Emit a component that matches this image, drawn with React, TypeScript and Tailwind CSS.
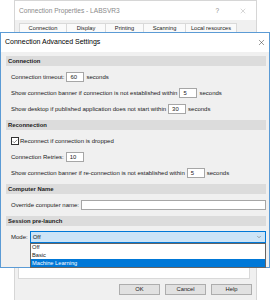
import { X, ChevronDown, Check } from "lucide-react";

const font = { fontFamily: '"Liberation Sans", Arial, sans-serif' };

function SectionHeader({ title }: { title: string }) {
  return (
    <div className="h-[10px] bg-[#dcdcdc] pl-[2px] flex items-center text-[5.9px] font-bold text-[#1a1a1a]">
      {title}
    </div>
  );
}

function NumBox({ value, w = "w-[18px]" }: { value: string; w?: string }) {
  return (
    <div className={`${w} h-[10px] bg-white border border-[#a6a6a6] flex items-center pl-[3px] text-[5.9px] mx-[2px]`}>
      {value}
    </div>
  );
}

function Row({ children }: { children: React.ReactNode }) {
  return <div className="h-[10px] flex items-center pl-[5px] text-[6px] text-[#1a1a1a]">{children}</div>;
}

const tabs = [
  { label: "Connection", w: "w-[48px]" },
  { label: "Display", w: "w-[40px]" },
  { label: "Printing", w: "w-[39px]" },
  { label: "Scanning", w: "w-[43px]" },
  { label: "Local resources", w: "w-[52px]" },
];

export default function App() {
  return (
    <div className="relative w-[271px] h-[300px] bg-white overflow-hidden" style={font}>
      {/* background window */}
      <div className="absolute left-[14px] top-0 w-[243px] h-[310px] border border-[#d6d6d6] bg-[#f0f0f0] flex flex-col">
        <div className="h-[19px] bg-white flex items-center pl-[4px] pr-[9px] text-[6.6px] text-[#8a8a8a]">
          <span className="flex-1">Connection Properties - LABSVR3</span>
          <span className="mr-[20px] text-[6.5px]">?</span>
          <X size={8} strokeWidth={1.2} className="text-[#9a9a9a]" />
        </div>
        <div className="flex pl-[5px] mt-[3px] h-[10px]">
          {tabs.map((t) => (
            <div
              key={t.label}
              className={`${t.w} h-[10px] border border-[#d9d9d9] -ml-px bg-[#fafafa] flex items-center justify-center text-[5.7px] text-[#1a1a1a]`}
            >
              {t.label}
            </div>
          ))}
        </div>
        <div className="mx-[3px] w-[232px] h-[246px] bg-white border border-[#d9d9d9]" />
        <div className="flex justify-end gap-[5px] pr-[4px] mt-[5px]">
          {["OK", "Cancel", "Help"].map((b) => (
            <div
              key={b}
              className="w-[41px] h-[11px] bg-[#e1e1e1] border border-[#adadad] flex items-center justify-center text-[5.8px] text-[#1a1a1a]"
            >
              {b}
            </div>
          ))}
        </div>
      </div>

      {/* front dialog */}
      <div className="absolute left-0 top-[32px] w-[270px] h-[236px] border border-[#5b9bd5] bg-[#f0f0f0] flex flex-col">
        <div className="h-[19px] bg-white flex items-center pl-[4px] pr-[3px] text-[7px] text-black shrink-0">
          <span className="flex-1">Connection Advanced Settings</span>
          <X size={9} strokeWidth={1.2} className="text-[#222]" />
        </div>
        <div className="flex flex-col gap-[6px] pl-[5px] pr-[3px] pt-[4px]">
          <SectionHeader title="Connection" />
          <Row>
            Connection timeout:
            <NumBox value="60" />
            seconds
          </Row>
          <Row>
            Show connection banner if connection is not established within
            <NumBox value="5" />
            seconds
          </Row>
          <Row>
            Show desktop if published application does not start within
            <NumBox value="30" />
            seconds
          </Row>
          <SectionHeader title="Reconnection" />
          <Row>
            <div className="w-[8px] h-[8px] bg-white border border-[#333] flex items-center justify-center mr-[1px]">
              <Check size={7} strokeWidth={2} className="text-[#222]" />
            </div>
            Reconnect if connection is dropped
          </Row>
          <Row>
            Connection Retries:
            <NumBox value="10" />
          </Row>
          <Row>
            Show connection banner if re-connection is not established within
            <NumBox value="5" />
            seconds
          </Row>
          <SectionHeader title="Computer Name" />
          <Row>
            Override computer name:
            <div className="flex-1 h-[10px] bg-white border border-[#a6a6a6] ml-[2px]" />
          </Row>
          <SectionHeader title="Session pre-launch" />
          <div className="relative h-[12px] flex items-center pl-[5px] text-[6px] text-[#1a1a1a] -mt-px">
            Mode:
            <div className="flex-1 h-[12px] ml-[2px] bg-[#cce4f7] border border-[#0078d7] flex items-center pl-[2px] pr-[3px]">
              <span className="flex-1">Off</span>
              <ChevronDown size={6} strokeWidth={1.5} className="text-[#333]" />
            </div>
            <div className="absolute left-[24px] right-0 top-[12px] bg-white border border-[#646464] flex flex-col text-[5.7px]">
              <div className="h-[7.5px] flex items-center pl-[1px]">Off</div>
              <div className="h-[7.5px] flex items-center pl-[1px]">Basic</div>
              <div className="h-[8px] flex items-center pl-[1px] bg-[#0078d7] text-white">Machine Learning</div>
            </div>
          </div>
        </div>
      </div>
    </div>
  );
}
